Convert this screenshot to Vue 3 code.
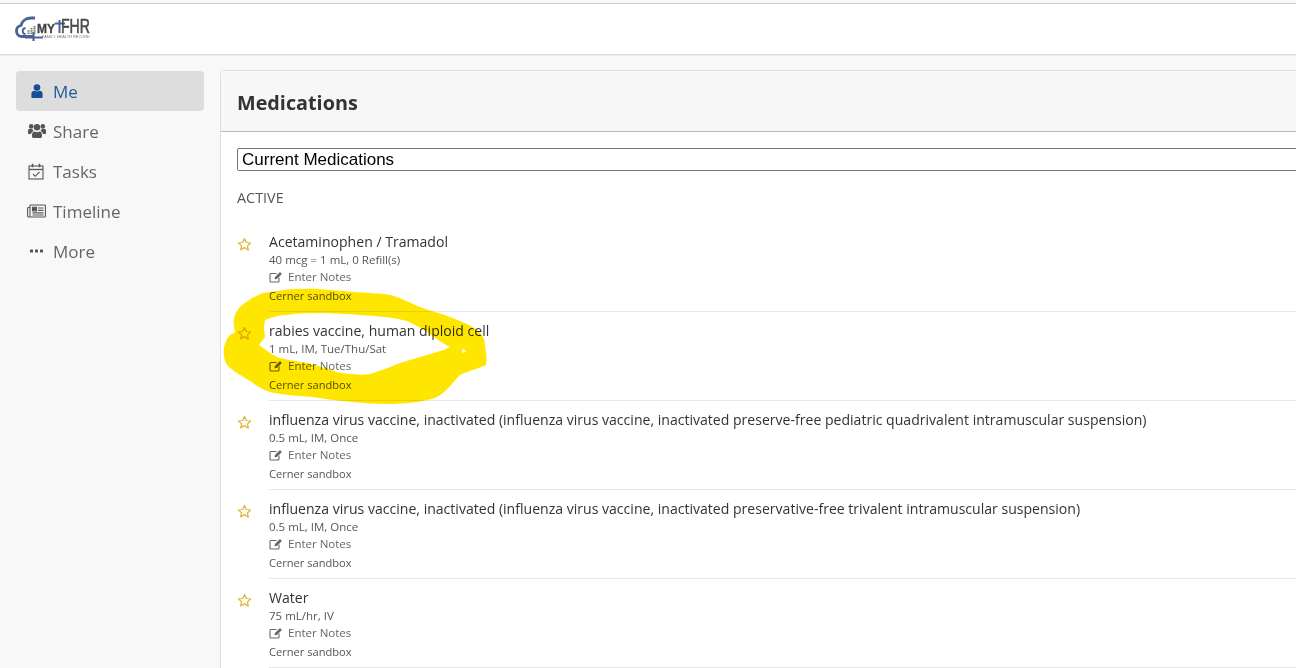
<script setup>
const nav = [
  { label: 'Me', icon: 'me', active: true },
  { label: 'Share', icon: 'share' },
  { label: 'Tasks', icon: 'tasks' },
  { label: 'Timeline', icon: 'timeline' },
  { label: 'More', icon: 'more' },
]
const meds = [
  { name: 'Acetaminophen / Tramadol', dose: '40 mcg = 1 mL, 0 Refill(s)' },
  { name: 'rabies vaccine, human diploid cell', dose: '1 mL, IM, Tue/Thu/Sat' },
  { name: 'influenza virus vaccine, inactivated (influenza virus vaccine, inactivated preserve-free pediatric quadrivalent intramuscular suspension)', dose: '0.5 mL, IM, Once' },
  { name: 'influenza virus vaccine, inactivated (influenza virus vaccine, inactivated preservative-free trivalent intramuscular suspension)', dose: '0.5 mL, IM, Once' },
  { name: 'Water', dose: '75 mL/hr, IV' },
]
</script>

<template>
  <div class="page">
    <header class="top">
      <svg class="logo" width="90" height="28" viewBox="0 0 90 28">
        <path d="M19 21.500H6.500C3 21.500 1.500 18.500 1.500 16C1.500 13 3.500 11 6 10.500C7 6 11 3 16 3H20" fill="none" stroke="#4a6595" stroke-width="2.800"/>
        <path d="M10.500 19C7 19 6.500 13.500 10.500 13" fill="none" stroke="#4a6595" stroke-width="1.800"/>
        <path d="M18.500 17v9M10 22.500h18" fill="none" stroke="#4a6595" stroke-width="2.200"/>
        <path d="M13.500 19v-4M16.500 19v-6M19.500 19v-8" stroke="#777" stroke-width="2" stroke-dasharray="1.500 .7"/>
        <text x="22" y="18" class="logo-my" textLength="18" lengthAdjust="spacingAndGlyphs">MY</text>
        <path d="M40 8.500h10M44.500 5v13" stroke="#4a6595" stroke-width="2" fill="none"/>
        <text x="46" y="18" class="logo-fhr" textLength="29" lengthAdjust="spacingAndGlyphs">FHR</text>
        <text x="27" y="22.500" class="logo-sub" textLength="48" lengthAdjust="spacingAndGlyphs">FAMILY HEALTH RECORD</text>
      </svg>
    </header>
    <div class="body">
      <nav class="side">
        <a v-for="item in nav" :key="item.label" class="nav-item" :class="{ active: item.active }">
          <span class="nav-icon">
            <svg v-if="item.icon === 'me'" width="12" height="14" viewBox="0 0 12 14"><circle cx="6" cy="3.600" r="3.300" fill="currentColor"/><path d="M.4 13.200V10c0-2 1.400-3.200 3-3.200 1.600 1 3.600 1 5.200 0 1.600 0 3 1.200 3 3.200v3.200c0 .4-.3.700-.7.700H1.100c-.4 0-.7-.3-.7-.7z" fill="currentColor"/></svg>
            <svg v-else-if="item.icon === 'share'" width="18" height="16" viewBox="0 0 18 16" fill="currentColor"><circle cx="3.200" cy="3.400" r="2.300"/><circle cx="14.800" cy="3.400" r="2.300"/><circle cx="9" cy="4.200" r="3.200"/><path d="M0 7.200C0 6.400.8 6 1.700 6h2.500c.3.800.8 1.500 1.400 2-1.400.5-2.300 1.500-2.600 3H1c-.6 0-1-.4-1-1zM18 7.200c0-.8-.8-1.200-1.700-1.200h-2.500c-.3.800-.8 1.500-1.400 2 1.400.5 2.300 1.500 2.600 3H17c.6 0 1-.4 1-1z"/><path d="M4 12.200C4 10 5 8.600 6.500 8.600c1.600.9 3.400.9 5 0 1.500 0 2.500 1.400 2.500 3.600v1.300c0 .8-.7 1.500-1.500 1.500h-7C4.700 15 4 14.300 4 13.500z"/></svg>
            <svg v-else-if="item.icon === 'tasks'" class="tasks-icon" width="16" height="17" viewBox="0 0 16 17" fill="none" stroke="currentColor"><rect x="1" y="3" width="14" height="13" stroke-width="1.100"/><path d="M1 6.500h14" stroke-width="1.300"/><path d="M4.500.8v3.500M11.500.8v3.500" stroke-width="1.600"/><path d="M5 11l2.300 2.300L11.500 9" stroke-width="1.100"/></svg>
            <svg v-else-if="item.icon === 'timeline'" width="19" height="14" viewBox="0 0 19 14" fill="none" stroke="currentColor" stroke-width="1.100"><rect x="3" y="1" width="15.400" height="12" rx=".8"/><path d="M3 3.500H1.500c-.5 0-.9.400-.9.900v7.500c0 .6.500 1.100 1.100 1.100H3"/><rect x="5.500" y="3.300" width="4" height="3.600" fill="currentColor"/><path d="M11 4h5.500M11 6.400h5.500M5.500 8.900h11M5.500 11h11"/></svg>
            <svg v-else width="13" height="4" viewBox="0 0 13 4" fill="currentColor"><rect x="0" y="0.500" width="3" height="3" rx=".6"/><rect x="5" y="0.500" width="3" height="3" rx=".6"/><rect x="10" y="0.500" width="3" height="3" rx=".6"/></svg>
          </span>
          <span>{{ item.label }}</span>
        </a>
      </nav>
      <main class="panel">
        <div class="panel-head"><h1>Medications</h1></div>
        <div class="panel-body">
          <select class="picker"><option>Current Medications</option></select>
          <div class="section">ACTIVE</div>
          <div v-for="med in meds" :key="med.name" class="row">
            <svg class="star" width="15" height="15" viewBox="0 0 24 24"><path d="M12 2.500l2.900 6.300 6.900.8-5.100 4.700 1.400 6.800L12 17l-6.100 3.600 1.400-6.800L2.200 9.600l6.900-.8z" fill="none" stroke="#e0b73c" stroke-width="2" stroke-linejoin="round"/></svg>
            <div class="info">
              <div class="name">{{ med.name }}</div>
              <div class="small dose">{{ med.dose }}</div>
              <div class="small notes">
                <svg width="14" height="12" viewBox="0 0 14 12" fill="none" stroke="#666"><path d="M10 6.500V10c0 .6-.4 1-1 1H2c-.6 0-1-.4-1-1V3.500c0-.6.4-1 1-1h5.500" stroke-width="1.100"/><path d="M5.500 8.300l.5-2.300L11 1l1.900 1.900-5 5z" fill="#666" stroke="none"/></svg>
                <span>Enter Notes</span>
              </div>
              <div class="small source">Cerner sandbox</div>
            </div>
          </div>
        </div>
      </main>
    </div>
    <svg class="scribble" width="1296" height="668" viewBox="0 0 1296 668">
      <path fill="#ffe600" fill-rule="evenodd" d="M270 292C285 289 303 288 317 289C330 290 342 291 353 292C367 293 380 293 390 295C402 298 410 303 420 307C430 311 440 313 450 317C460 321 471 325 477 330C483 335 485 340 485 345C486 352 487 358 486 365C478 369 468 371 460 375C454 381 449 388 443 393C438 397 433 399 427 400C415 403 400 404 387 404C375 404 364 403 353 402C340 401 326 399 313 397C298 396 283 395 270 392C264 390 258 387 253 383C244 377 234 372 227 365C224 360 223 354 224 348C225 342 227 338 230 335C232 334 234 333 235 332C234 327 233 322 234 318C235 314 237 310 240 307C247 301 255 296 263 293ZM265 320C272 317 279 315 287 315C298 313 309 313 320 313C333 313 347 314 360 315C376 316 392 317 407 321C414 324 421 328 427 332C434 337 442 343 450 347C446 349 441 351 437 352C425 356 412 359 400 363C390 367 380 371 370 374C364 375 359 375 353 374C347 374 342 373 337 372C327 369 317 365 307 363C297 361 287 360 277 357C271 354 265 349 259 345C261 342 263 340 265 337C265 334 264 331 264 328C264 325 265 322 265 320ZM462 349L467 351L462 353Z"/>
    </svg>
  </div>
</template>

<style>
html, body { margin: 0; overflow: hidden; background: #f8f8f8; }
</style>
<style scoped>
.page {
  position: relative;
  width: 1296px;
  height: 668px;
  overflow: hidden;
  background: #f8f8f8;
  font-family: "Open Sans", sans-serif;
  color: #444;
}
.top {
  height: 50px;
  margin-top: 3px;
  background: #fff;
  border-top: 1px solid #ccc;
  border-bottom: 1px solid #ddd;
  box-shadow: 0 1px 1px rgba(0,0,0,.05);
  display: flex;
  align-items: center;
  padding-left: 15px;
}
.logo { filter: blur(.35px); }
.logo-my { font: 700 12.500px "Liberation Sans", sans-serif; fill: #444; stroke: #444; stroke-width: .3px; }
.logo-fhr { font: 400 21px "Liberation Sans", sans-serif; fill: #4a4a4a; stroke: #4a4a4a; stroke-width: .6px; }
.logo-sub { font: 4px "Liberation Sans", sans-serif; fill: #777; }
.body { display: flex; align-items: flex-start; padding: 16px 0 0 16px; gap: 16px; }
.side { width: 188px; flex: none; display: flex; flex-direction: column; }
.nav-item {
  height: 40px;
  display: flex;
  align-items: center;
  border-radius: 4px;
  font-size: 17px;
  color: #666;
}
.nav-item.active { background: #ddd; color: #1f5a9e; }
.nav-icon { width: 37px; padding-left: 4px; box-sizing: border-box; display: flex; justify-content: center; color: #555; }
.tasks-icon { margin-left: -2px; }
.active .nav-icon { color: #144f9a; }
.panel {
  width: 1200px;
  height: 700px;
  flex: none;
  margin-top: -1px;
  background: #fff;
  border: 1px solid #ddd;
  border-radius: 4px 0 0 0;
}
.panel-head {
  box-sizing: border-box;
  height: 61px;
  background: #f7f7f7;
  border-bottom: 1px solid #bbb;
  display: flex;
  align-items: center;
  padding-left: 16px;
}
h1 { margin: 2px 0 0; font-size: 19.800px; font-weight: 700; color: #333; }
.panel-body { padding: 16px 0 0 16px; }
.picker {
  display: block;
  width: 1100px;
  height: 23px;
  padding: 0 0 0 4px;
  background: #fff;
  border: 1px solid #767676;
  border-radius: 2px;
  font: 17px "Liberation Sans", sans-serif;
  color: #000;
  appearance: none;
}
.section { margin-top: 17px; font-size: 14.400px; line-height: 19px; color: #555; height: 35px; }
.row { display: flex; height: 89px; }
.star { margin-top: 14px; margin-right: 17px; flex: none; }
.info { flex: 1; border-bottom: 1px solid #e8e8e8; padding-top: 9px; box-sizing: border-box; }
.name { font-size: 14.070px; line-height: 20px; color: #333; white-space: nowrap; }
.small { font-size: 11.100px; color: #555; white-space: nowrap; }
.dose { font-size: 11.500px; line-height: 16px; }
.notes { display: flex; align-items: center; gap: 5px; line-height: 18px; font-size: 11.500px; color: #666; }
.source { margin-top: 2px; line-height: 16px; }
.scribble { position: absolute; left: 0; top: 0; pointer-events: none; mix-blend-mode: multiply; }
</style>
